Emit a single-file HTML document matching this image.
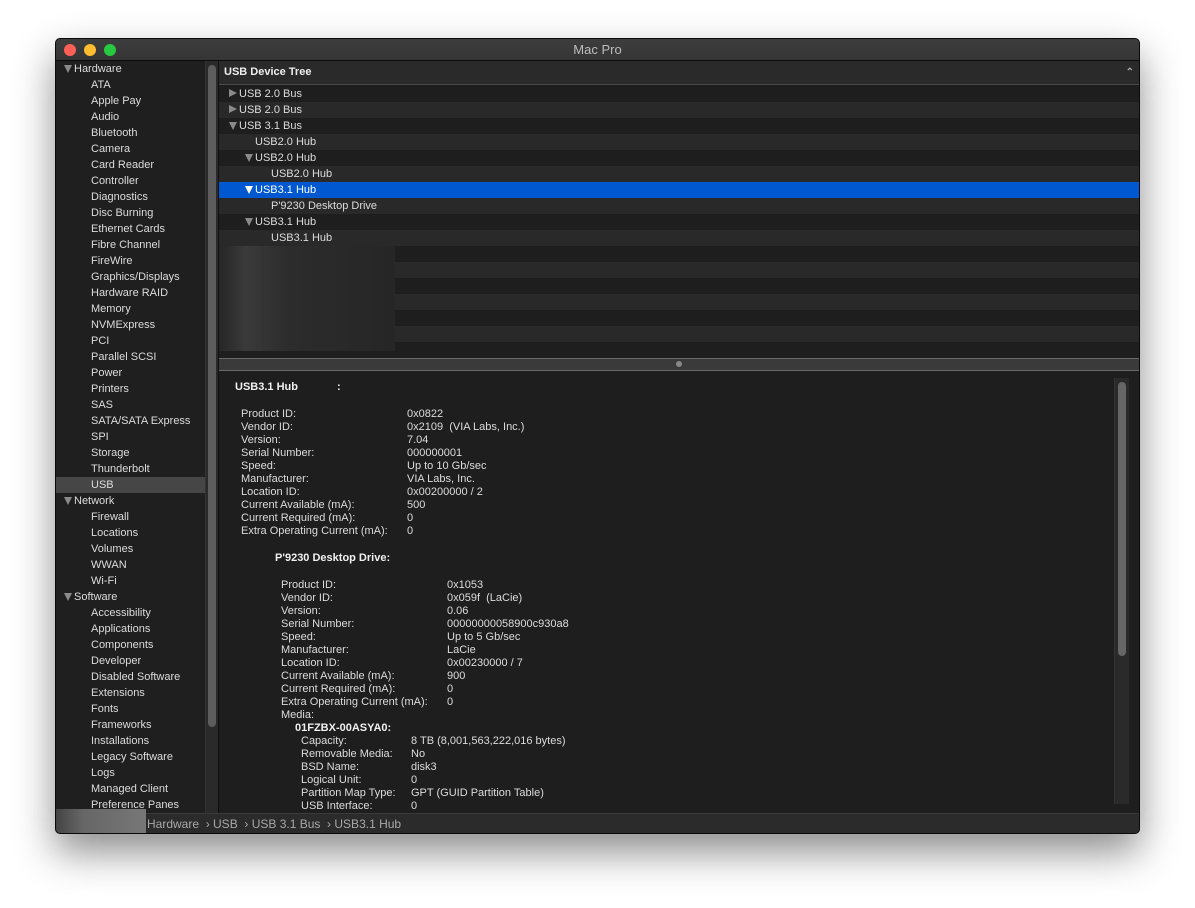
<!DOCTYPE html>
<html><head><meta charset="utf-8"><style>
*{margin:0;padding:0;box-sizing:border-box}
body{width:1195px;height:908px;background:#fff;position:relative;overflow:hidden;font-family:"Liberation Sans",sans-serif;font-size:11px;color:#dcdcdc}
.win{position:absolute;left:55px;top:38px;width:1085px;height:796px;background:#1e1e1e;border:1px solid #0a0a0a;border-radius:5px;box-shadow:0 18px 40px rgba(0,0,0,.45);overflow:hidden}
.tb{position:absolute;left:0;top:0;width:100%;height:22px;background:linear-gradient(#3d3d3d,#353535);border-bottom:1px solid #0c0c0c;text-align:center;line-height:21px;font-size:13px;color:#bdbdbd}
.dot{position:absolute;top:5px;width:12px;height:12px;border-radius:50%}
.a{position:absolute;white-space:nowrap;line-height:13px}
.side{position:absolute;left:0;top:22px;width:149px;height:752px;background:#1f1f1f}
.s{position:absolute;left:35px;height:16px;line-height:16px;white-space:nowrap}
.h{left:8px}
.tri{display:inline-block;width:0;height:0;border-left:4.5px solid transparent;border-right:4.5px solid transparent;border-top:8px solid #8a8a8a;margin-right:2px;vertical-align:-1px}
.trr{display:inline-block;width:0;height:0;border-top:4.5px solid transparent;border-bottom:4.5px solid transparent;border-left:8px solid #8a8a8a;margin-right:2px;vertical-align:0}
.row{position:absolute;left:164px;width:920px;height:16px;line-height:16px;white-space:nowrap}
b{font-weight:bold;color:#f0f0f0}
</style></head><body>
<div class="win">
<div class="tb">Mac Pro
<div class="dot" style="left:8px;background:#fe5f57"></div>
<div class="dot" style="left:28px;background:#febc2e"></div>
<div class="dot" style="left:48px;background:#28c840"></div></div>
<div class="side">
<div class="s h" style="top:0"><span class="tri"></span>Hardware</div>
<div class="s" style="top:16px">ATA</div><div class="s" style="top:32px">Apple Pay</div><div class="s" style="top:48px">Audio</div><div class="s" style="top:64px">Bluetooth</div><div class="s" style="top:80px">Camera</div><div class="s" style="top:96px">Card Reader</div><div class="s" style="top:112px">Controller</div><div class="s" style="top:128px">Diagnostics</div><div class="s" style="top:144px">Disc Burning</div><div class="s" style="top:160px">Ethernet Cards</div><div class="s" style="top:176px">Fibre Channel</div><div class="s" style="top:192px">FireWire</div><div class="s" style="top:208px">Graphics/Displays</div><div class="s" style="top:224px">Hardware RAID</div><div class="s" style="top:240px">Memory</div><div class="s" style="top:256px">NVMExpress</div><div class="s" style="top:272px">PCI</div><div class="s" style="top:288px">Parallel SCSI</div><div class="s" style="top:304px">Power</div><div class="s" style="top:320px">Printers</div><div class="s" style="top:336px">SAS</div><div class="s" style="top:352px">SATA/SATA Express</div><div class="s" style="top:368px">SPI</div><div class="s" style="top:384px">Storage</div><div class="s" style="top:400px">Thunderbolt</div>
<div style="position:absolute;left:0;top:416px;width:149px;height:16px;background:#464646"></div>
<div class="s" style="top:416px">USB</div>
<div class="s h" style="top:432px"><span class="tri"></span>Network</div>
<div class="s" style="top:448px">Firewall</div><div class="s" style="top:464px">Locations</div><div class="s" style="top:480px">Volumes</div><div class="s" style="top:496px">WWAN</div><div class="s" style="top:512px">Wi-Fi</div>
<div class="s h" style="top:528px"><span class="tri"></span>Software</div>
<div class="s" style="top:544px">Accessibility</div><div class="s" style="top:560px">Applications</div><div class="s" style="top:576px">Components</div><div class="s" style="top:592px">Developer</div><div class="s" style="top:608px">Disabled Software</div><div class="s" style="top:624px">Extensions</div><div class="s" style="top:640px">Fonts</div><div class="s" style="top:656px">Frameworks</div><div class="s" style="top:672px">Installations</div><div class="s" style="top:688px">Legacy Software</div><div class="s" style="top:704px">Logs</div><div class="s" style="top:720px">Managed Client</div><div class="s" style="top:736px">Preference Panes</div>
</div>
<div style="position:absolute;left:149px;top:22px;width:14px;height:752px;background:#2a2a2a;border-left:1px solid #333;border-right:1px solid #111"></div>
<div style="position:absolute;left:152px;top:26px;width:8px;height:662px;background:#5d5d5d;border-radius:4px"></div>
<div style="position:absolute;left:163px;top:22px;width:921px;height:24px;background:#2a2a2a;border-bottom:1px solid #4a4a4a;line-height:23px;padding-left:5px;font-weight:bold;color:#eee">USB Device Tree<span style="position:absolute;right:6px;top:0;color:#aaa;font-size:10px">&#8963;</span></div>
<div style="position:absolute;left:163px;top:47px;width:921px;height:272px;background:repeating-linear-gradient(#1e1e1e 0 16px,#292929 16px 32px)"></div>
<div style="position:absolute;left:163px;top:143px;width:921px;height:16px;background:#0058d0"></div>
<div class="row" style="top:47px;left:173px"><span class="trr"></span>USB 2.0 Bus</div>
<div class="row" style="top:63px;left:173px"><span class="trr"></span>USB 2.0 Bus</div>
<div class="row" style="top:79px;left:173px"><span class="tri"></span>USB 3.1 Bus</div>
<div class="row" style="top:95px;left:199px">USB2.0 Hub</div>
<div class="row" style="top:111px;left:189px"><span class="tri"></span>USB2.0 Hub</div>
<div class="row" style="top:127px;left:215px">USB2.0 Hub</div>
<div class="row" style="top:143px;left:189px;color:#fff"><span class="tri" style="border-top-color:#fff"></span>USB3.1 Hub</div>
<div class="row" style="top:159px;left:215px">P'9230 Desktop Drive</div>
<div class="row" style="top:175px;left:189px"><span class="tri"></span>USB3.1 Hub</div>
<div class="row" style="top:191px;left:215px">USB3.1 Hub</div>
<div style="position:absolute;left:163px;top:207px;width:176px;height:105px;background:linear-gradient(90deg,#262626,#3a3a3a 15%,#2c2c2c 40%,#262626)"></div>
<div style="position:absolute;left:163px;top:319px;width:921px;height:13px;background:#3a3a3a;border-top:1px solid #6a6a6a;border-bottom:1px solid #6a6a6a"></div>
<div style="position:absolute;left:620px;top:322px;width:6px;height:6px;border-radius:50%;background:#888"></div>
<div style="position:absolute;left:163px;top:332px;width:921px;height:442px;background:#1e1e1e"></div>
<div style="position:absolute;left:1058px;top:339px;width:15px;height:426px;background:#2a2a2a;border-left:1px solid #333"></div>
<div style="position:absolute;left:1062px;top:343px;width:8px;height:274px;background:#666;border-radius:4px"></div>
<div style="position:absolute;left:0;top:774px;width:1085px;height:21px;background:#2b2b2b;border-top:1px solid #3a3a3a;color:#a8a8a8;font-size:12px;line-height:20px;padding-left:91px;white-space:nowrap">Hardware &nbsp;› USB &nbsp;› USB 3.1 Bus &nbsp;› USB3.1 Hub</div>
<div style="position:absolute;left:0;top:770px;width:90px;height:26px;background:linear-gradient(90deg,#444,#666 30%,#777)"></div>
</div>
<div style="position:absolute;left:0;top:2px">
<div class="a" style="left:235px;top:379px"><b>USB3.1 Hub</b></div><div class="a" style="left:337px;top:379px"><b>:</b></div>
<div class="a" style="left:241px;top:406px;line-height:13px">Product ID:<br>Vendor ID:<br>Version:<br>Serial Number:<br>Speed:<br>Manufacturer:<br>Location ID:<br>Current Available (mA):<br>Current Required (mA):<br>Extra Operating Current (mA):</div>
<div class="a" style="left:407px;top:406px">0x0822<br>0x2109 &nbsp;(VIA Labs, Inc.)<br>7.04<br>000000001<br>Up to 10 Gb/sec<br>VIA Labs, Inc.<br>0x00200000 / 2<br>500<br>0<br>0</div>
<div class="a" style="left:275px;top:550px"><b>P'9230 Desktop Drive:</b></div>
<div class="a" style="left:281px;top:577px">Product ID:<br>Vendor ID:<br>Version:<br>Serial Number:<br>Speed:<br>Manufacturer:<br>Location ID:<br>Current Available (mA):<br>Current Required (mA):<br>Extra Operating Current (mA):<br>Media:</div>
<div class="a" style="left:447px;top:577px">0x1053<br>0x059f &nbsp;(LaCie)<br>0.06<br>00000000058900c930a8<br>Up to 5 Gb/sec<br>LaCie<br>0x00230000 / 7<br>900<br>0<br>0</div>
<div class="a" style="left:295px;top:720px"><b>01FZBX-00ASYA0:</b></div>
<div class="a" style="left:301px;top:733px">Capacity:<br>Removable Media:<br>BSD Name:<br>Logical Unit:<br>Partition Map Type:<br>USB Interface:</div>
<div class="a" style="left:411px;top:733px">8 TB (8,001,563,222,016 bytes)<br>No<br>disk3<br>0<br>GPT (GUID Partition Table)<br>0</div>
</div>
</body></html>
